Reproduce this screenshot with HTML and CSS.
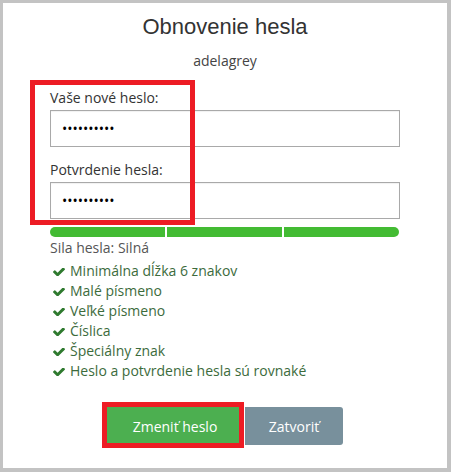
FILE: index.html
```html
<!DOCTYPE html>
<html>
<head>
<meta charset="utf-8">
<link rel="stylesheet" href="styles.css">
</head>
<body>
<div class="panel">
  <h1 class="title">Obnovenie hesla</h1>
  <div class="user">adelagrey</div>
  <div class="field">
    <label class="label">Vaše nové heslo:</label>
    <input class="input" type="password" value="**********">
  </div>
  <div class="field second">
    <label class="label">Potvrdenie hesla:</label>
    <input class="input" type="password" value="**********">
  </div>
  <div class="bar">
    <span class="seg"></span><span class="seg"></span><span class="seg"></span>
  </div>
  <div class="strength">Sila hesla: Silná</div>
  <ul class="checks">
    <li><svg class="ic" viewBox="121 438 1550 984"><path d="M1671 566q0 40-28 68l-724 724-136 136q-28 28-68 28t-68-28l-136-136-362-362q-28-28-28-68t28-68l136-136q28-28 68-28t68 28l294 295 656-657q28-28 68-28t68 28l136 136q28 28 28 68z"/></svg>Minimálna dĺžka 6 znakov</li>
    <li><svg class="ic" viewBox="121 438 1550 984"><path d="M1671 566q0 40-28 68l-724 724-136 136q-28 28-68 28t-68-28l-136-136-362-362q-28-28-28-68t28-68l136-136q28-28 68-28t68 28l294 295 656-657q28-28 68-28t68 28l136 136q28 28 28 68z"/></svg>Malé písmeno</li>
    <li><svg class="ic" viewBox="121 438 1550 984"><path d="M1671 566q0 40-28 68l-724 724-136 136q-28 28-68 28t-68-28l-136-136-362-362q-28-28-28-68t28-68l136-136q28-28 68-28t68 28l294 295 656-657q28-28 68-28t68 28l136 136q28 28 28 68z"/></svg>Veľké písmeno</li>
    <li><svg class="ic" viewBox="121 438 1550 984"><path d="M1671 566q0 40-28 68l-724 724-136 136q-28 28-68 28t-68-28l-136-136-362-362q-28-28-28-68t28-68l136-136q28-28 68-28t68 28l294 295 656-657q28-28 68-28t68 28l136 136q28 28 28 68z"/></svg>Číslica</li>
    <li><svg class="ic" viewBox="121 438 1550 984"><path d="M1671 566q0 40-28 68l-724 724-136 136q-28 28-68 28t-68-28l-136-136-362-362q-28-28-28-68t28-68l136-136q28-28 68-28t68 28l294 295 656-657q28-28 68-28t68 28l136 136q28 28 28 68z"/></svg>Špeciálny znak</li>
    <li><svg class="ic" viewBox="121 438 1550 984"><path d="M1671 566q0 40-28 68l-724 724-136 136q-28 28-68 28t-68-28l-136-136-362-362q-28-28-28-68t28-68l136-136q28-28 68-28t68 28l294 295 656-657q28-28 68-28t68 28l136 136q28 28 28 68z"/></svg>Heslo a potvrdenie hesla sú rovnaké</li>
  </ul>
  <div class="actions">
    <div class="btn-wrap">
      <button class="btn btn-primary">Zmeniť heslo</button>
      <span class="mark mark-btn"></span>
    </div>
    <button class="btn btn-secondary">Zatvoriť</button>
  </div>
  <span class="mark mark-fields"></span>
</div>
</body>
</html>
```
FILE: styles.css
```css
html, body {
  margin: 0;
  padding: 0;
}
body {
  background: #c3c3c3;
  width: 451px;
  height: 472px;
  overflow: hidden;
  font-family: "Open Sans", "Liberation Sans", sans-serif;
}
.panel {
  position: relative;
  box-sizing: border-box;
  margin: 3px 4px 0 3px;
  width: 444px;
  height: 465px;
  background: #fff;
  padding: 11px 47px 0 47px;
}
.title {
  margin: 0 0 11px;
  font-family: "Liberation Sans", Arial, sans-serif;
  font-weight: normal;
  font-size: 22px;
  line-height: 26px;
  color: #333;
  text-align: center;
}
.user {
  font-size: 14px;
  line-height: 20px;
  color: #444;
  text-align: center;
  margin-bottom: 17px;
}
.field {
  display: flex;
  flex-direction: column;
}
.field.second {
  margin-top: 13px;
}
.label {
  font-size: 14px;
  line-height: 20px;
  color: #333;
  margin-bottom: 2px;
}
.input {
  box-sizing: border-box;
  width: 350px;
  height: 37px;
  margin: 0;
  border: 1px solid #a9a9a9;
  box-shadow: inset 0 1px 1px rgba(0,0,0,0.06);
  padding: 0 11px;
  font-family: "Open Sans", sans-serif;
  font-size: 14px;
  color: #000;
  outline: none;
}
.bar {
  display: grid;
  grid-template-columns: 1fr 1fr 1fr;
  gap: 2px;
  width: 349px;
  height: 10px;
  margin-top: 8px;
}
.seg {
  background: #43bb33;
}
.seg:first-child {
  border-radius: 5px 0 0 5px;
}
.seg:last-child {
  border-radius: 0 5px 5px 0;
}
.strength {
  margin-top: 1px;
  font-size: 14px;
  line-height: 20px;
  color: #555;
}
.checks {
  list-style: none;
  margin: 3px 0 0;
  padding: 0 0 0 3px;
}
.checks li {
  display: flex;
  align-items: baseline;
  font-size: 14px;
  line-height: 20px;
  color: #3c6b3c;
}
.ic {
  width: 12px;
  height: 8px;
  margin-right: 5px;
  fill: #2f7a2f;
  flex: none;
}
.actions {
  display: flex;
  justify-content: center;
  gap: 2px;
  margin-top: 26px;
}
.btn-wrap {
  position: relative;
  display: flex;
}
.btn {
  border: none;
  margin: 0;
  height: 38px;
  font-family: "Open Sans", sans-serif;
  font-size: 14px;
  color: #fff;
  padding: 0;
  cursor: pointer;
}
.btn-primary {
  width: 136px;
  background: #4caf50;
}
.btn-secondary {
  width: 98px;
  background: #78909c;
  border-radius: 0 3px 3px 0;
}
.mark {
  position: absolute;
  box-sizing: border-box;
  border: 5px solid #ed1c24;
  pointer-events: none;
}
.mark-btn {
  left: -5px;
  top: -5px;
  width: 142px;
  height: 46px;
}
.mark-fields {
  left: 27px;
  top: 77px;
  width: 165px;
  height: 145px;
}
```
